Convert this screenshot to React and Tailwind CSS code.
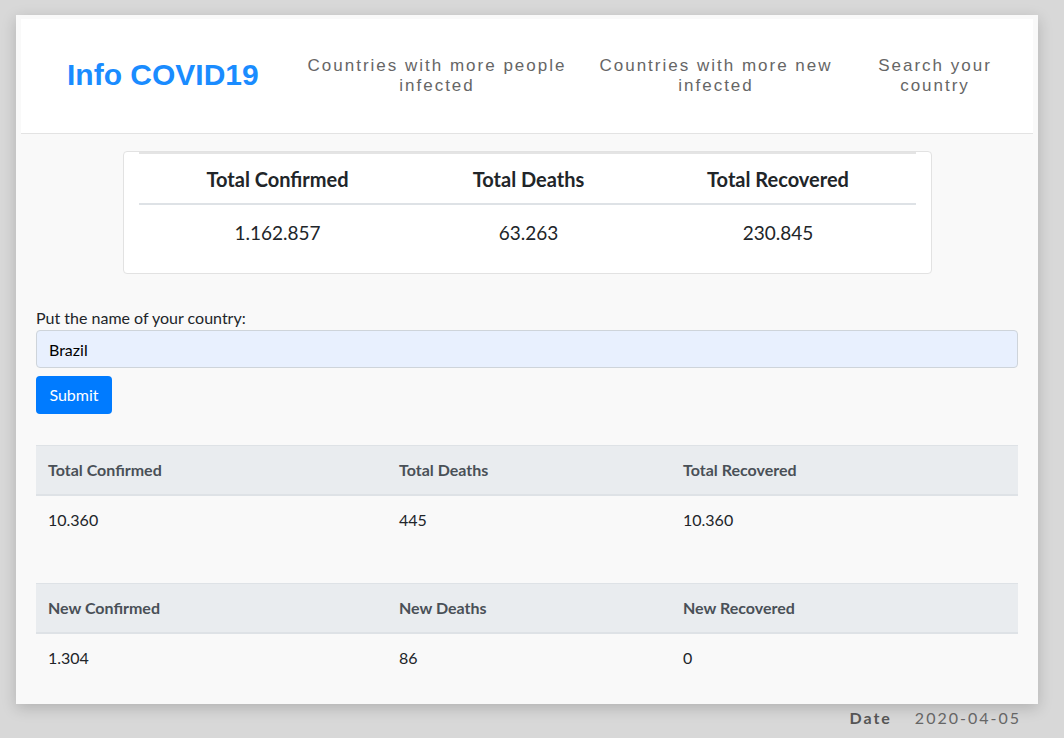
import React from 'react';

const totals = [
  { label: 'Total Confirmed', value: '1.162.857', w: 'w-[278px]' },
  { label: 'Total Deaths', value: '63.263', w: 'w-[224px]' },
  { label: 'Total Recovered', value: '230.845', w: 'w-[275px]' },
];

const StatTable = ({ heads, values }) => (
  <table className="w-full border-collapse text-[16px] text-[#212529]">
    <thead>
      <tr className="bg-[#e9ecef] text-[#495057]">
        {heads.map((h, i) => (
          <th
            key={h}
            className={`text-left font-bold px-3 py-3 leading-6 border-t border-b-2 border-[#dee2e6] ${
              i === 0 ? 'w-[351px]' : i === 1 ? 'w-[284px]' : ''
            }`}
          >
            {h}
          </th>
        ))}
      </tr>
    </thead>
    <tbody>
      <tr>
        {values.map((v, i) => (
          <td key={i} className="px-3 py-3 leading-6">
            {v}
          </td>
        ))}
      </tr>
    </tbody>
  </table>
);

export default function App() {
  return (
    <div className="w-[1064px] h-[738px] bg-[#d8d8d8] pt-[15px] pl-[16px] overflow-hidden font-['Lato',sans-serif]">
      <div className="w-[1022px] h-[689px] bg-[#f9f9f9] pt-[4px] px-[5px] shadow-[0_4px_14px_rgba(0,0,0,0.18)]">
        <header className="h-[115px] bg-white border-b border-[#e3e3e3] flex items-center font-['Liberation_Sans',Arial,sans-serif]">
          <h1 className="ml-[46px] w-[235px] text-[30px] font-bold text-[#1a8cff] -mt-[4px]">Info COVID19</h1>
          <nav className="flex items-center text-[17px] leading-5 tracking-[2px] text-[#666] text-center -mt-[1px]">
            <a className="w-[270px]">Countries with more people infected</a>
            <a className="w-[250px] ml-[19px]">Countries with more new infected</a>
            <a className="w-[130px] ml-[29px]">Search your country</a>
          </nav>
        </header>

        <div className="px-[15px]">
          <div className="mx-auto mt-[17px] w-[809px] h-[123px] bg-white border border-[#e2e2e2] rounded px-[15px]">
            <table className="border-collapse text-[#212529]">
              <thead>
                <tr className="border-t-2 border-[#e4e4e4]">
                  {totals.map((t) => (
                    <th key={t.label} className={`${t.w} text-center text-[20px] font-bold pt-[11px] pb-[10px] leading-[28px] border-b-2 border-[#dee2e6]`}>
                      {t.label}
                    </th>
                  ))}
                </tr>
              </thead>
              <tbody>
                <tr>
                  {totals.map((t) => (
                    <td key={t.label} className="text-center text-[19px] pt-[16px] leading-6">
                      {t.value}
                    </td>
                  ))}
                </tr>
              </tbody>
            </table>
          </div>

          <form className="mt-[32px]">
            <label className="block text-[16px] leading-6 text-[#212529]">Put the name of your country:</label>
            <input
              readOnly
              value="Brazil"
              className="block w-full h-[38px] px-3 text-[16px] text-black bg-[#e8f0fe] border border-[#ced4da] rounded outline-none"
            />
            <button type="button" className="mt-2 h-[38px] w-[76px] text-[16px] text-white bg-[#007bff] rounded">
              Submit
            </button>
          </form>

          <div className="mt-[31px]">
            <StatTable heads={['Total Confirmed', 'Total Deaths', 'Total Recovered']} values={['10.360', '445', '10.360']} />
          </div>
          <div className="mt-[39px]">
            <StatTable heads={['New Confirmed', 'New Deaths', 'New Recovered']} values={['1.304', '86', '0']} />
          </div>
        </div>
      </div>

      <div className="w-[1022px] flex justify-end items-center gap-[23px] pr-[17px] pt-[2px] text-[16px] tracking-[2px]">
        <span className="font-bold text-[#555]">Date</span>
        <span className="text-[#666]">2020-04-05</span>
      </div>
    </div>
  );
}
